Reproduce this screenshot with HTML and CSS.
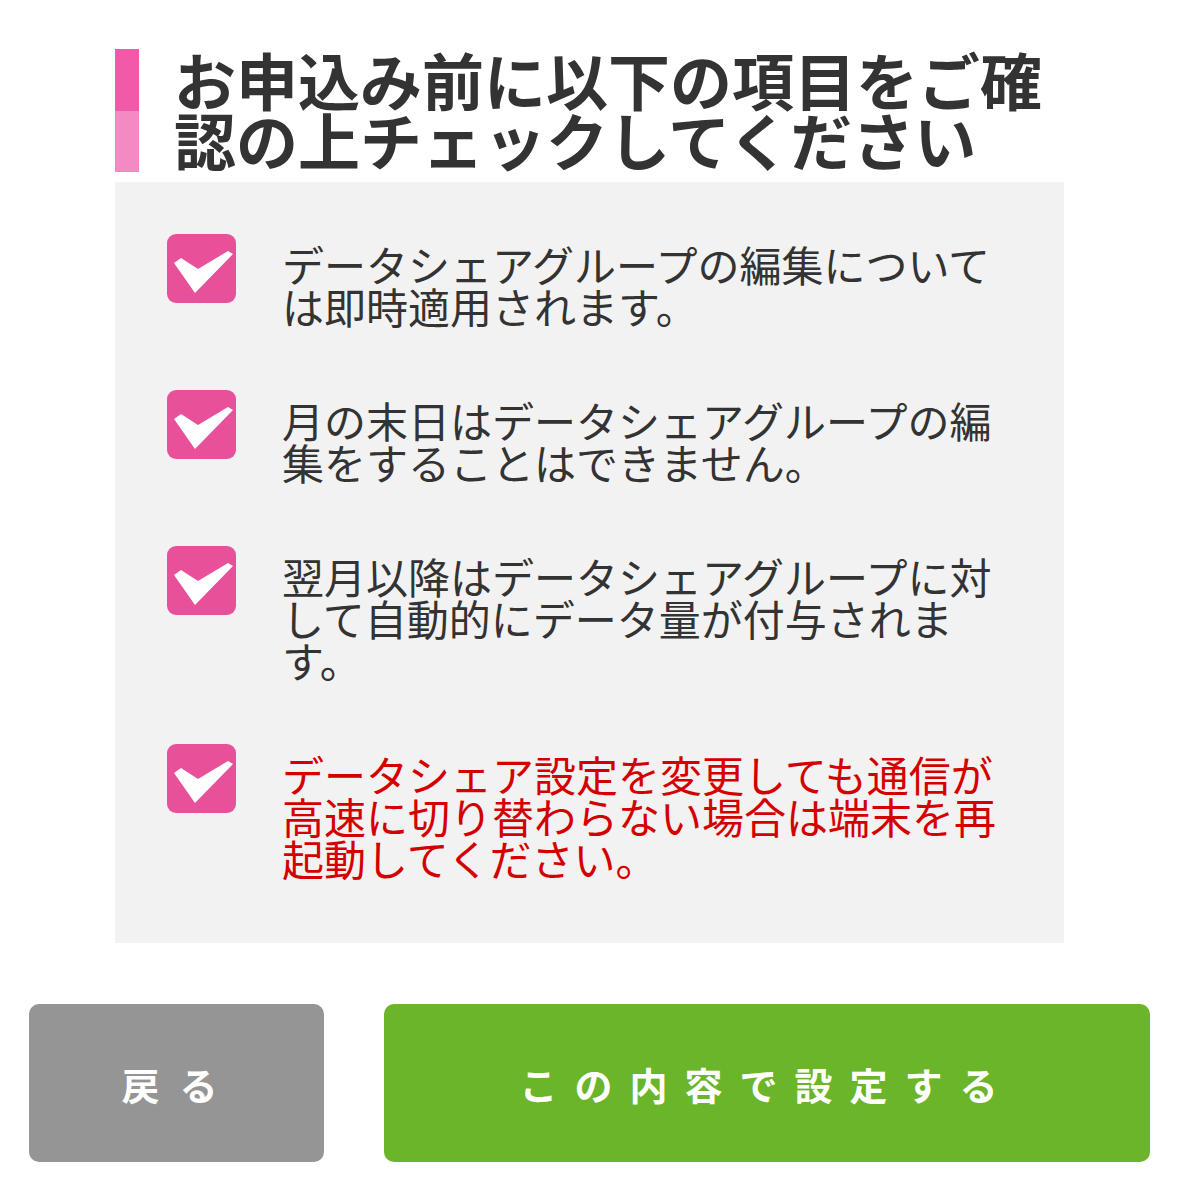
FILE: index.html
```html
<!DOCTYPE html>
<html lang="ja">
<head>
  <meta charset="UTF-8">
  <meta name="viewport" content="width=device-width, initial-scale=1.0">
  <title>データシェア設定の確認</title>
  <link rel="stylesheet" href="styles.css">
</head>
<body>
  <main>
    <section class="confirm">
      <h1 class="confirm-title">お申込み前に以下の項目をご確認の上チェックしてください</h1>

      <div class="check-panel">
        <div class="check-item">
          <span class="check-box">
            <svg viewBox="0 0 69 69" width="69" height="69"><polygon points="7,29 14,24 31,35 61,17 66,20 28,59" fill="#fff"/></svg>
          </span>
          <p class="check-text">データシェアグループの編集については即時適用されます。</p>
        </div>

        <div class="check-item">
          <span class="check-box">
            <svg viewBox="0 0 69 69" width="69" height="69"><polygon points="7,29 14,24 31,35 61,17 66,20 28,59" fill="#fff"/></svg>
          </span>
          <p class="check-text">月の末日はデータシェアグループの編集をすることはできません。</p>
        </div>

        <div class="check-item">
          <span class="check-box">
            <svg viewBox="0 0 69 69" width="69" height="69"><polygon points="7,29 14,24 31,35 61,17 66,20 28,59" fill="#fff"/></svg>
          </span>
          <p class="check-text">翌月以降はデータシェアグループに対して自動的にデータ量が付与されます。</p>
        </div>

        <div class="check-item">
          <span class="check-box">
            <svg viewBox="0 0 69 69" width="69" height="69"><polygon points="7,29 14,24 31,35 61,17 66,20 28,59" fill="#fff"/></svg>
          </span>
          <p class="check-text warn">データシェア設定を変更しても通信が高速に切り替わらない場合は端末を再起動してください。</p>
        </div>
      </div>
    </section>

    <div class="actions">
      <button class="btn btn-back" type="button">戻る</button>
      <button class="btn btn-submit" type="submit">この内容で設定する</button>
    </div>
  </main>
</body>
</html>
```

FILE: styles.css
```css
body {
  font-family: 'Noto Sans CJK JP', 'Noto Sans', sans-serif;
  margin: 0;
  padding: 0;
  background-color: #fff;
  color: #333;
}

main {
  padding: 49px 0 0;
}

.confirm {
  margin: 0 115px;
}

.confirm-title {
  margin: 0;
  padding: 0 0 3px 35px;
  border-left: 24px solid #f05aa8;
  border-image: linear-gradient(to bottom, #f05aa8 0%, #f05aa8 50%, #f48ac4 50%, #f48ac4 100%) 1;
  font-size: 62px;
  line-height: 60px;
  font-weight: 700;
  color: #333;
}

.check-panel {
  margin-top: 10px;
  padding: 52px 60px 64px 52px;
  background-color: #f2f2f2;
}

.check-item {
  display: flex;
  align-items: flex-start;
  margin-bottom: 63px;
}

.check-item:last-child {
  margin-bottom: 0;
}

.check-box {
  flex: 0 0 69px;
  width: 69px;
  height: 69px;
  border-radius: 9px;
  background-color: #e8519a;
}

.check-box svg {
  display: block;
}

.check-text {
  margin: 9px 0 0 46px;
  font-size: 42px;
  line-height: 42px;
  color: #333;
  line-break: strict;
}

.warn {
  color: #d40000;
}

.actions {
  display: flex;
  gap: 60px;
  padding: 0 29px;
  margin-top: 61px;
}

.btn {
  height: 158px;
  border: none;
  border-radius: 10px;
  color: #fff;
  font-family: inherit;
  font-size: 38px;
  font-weight: 700;
  letter-spacing: 17px;
  cursor: pointer;
}

.btn-back {
  flex: 0 0 295px;
  background-color: #959595;
  letter-spacing: 20px;
  padding-left: 12px;
}

.btn-submit {
  flex: 1;
  background-color: #6bb52a;
}
```
